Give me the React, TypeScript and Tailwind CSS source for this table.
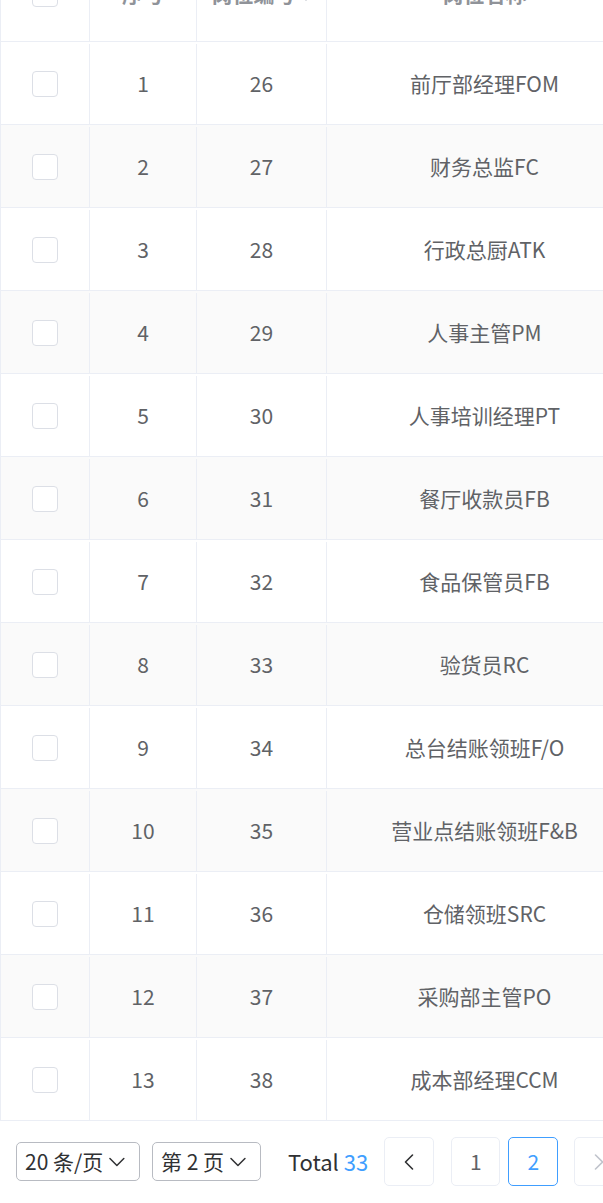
import React from "react";
import { ChevronDown, ChevronLeft, ChevronRight } from "lucide-react";

const rows: [number, number, string][] = [
  [1, 26, "前厅部经理FOM"],
  [2, 27, "财务总监FC"],
  [3, 28, "行政总厨ATK"],
  [4, 29, "人事主管PM"],
  [5, 30, "人事培训经理PT"],
  [6, 31, "餐厅收款员FB"],
  [7, 32, "食品保管员FB"],
  [8, 33, "验货员RC"],
  [9, 34, "总台结账领班F/O"],
  [10, 35, "营业点结账领班F&B"],
  [11, 36, "仓储领班SRC"],
  [12, 37, "采购部主管PO"],
  [13, 38, "成本部经理CCM"],
];

function Checkbox() {
  return <div className="w-[26px] h-[26px] rounded-[4px] border border-[#dcdfe6] bg-white" />;
}

export default function App() {
  return (
    <div
      className="w-[603px] h-[1203px] overflow-hidden bg-white text-[#606266]"
      style={{ fontFamily: '"Noto Sans CJK SC", "Noto Sans", sans-serif' }}
    >
      <div className="w-[642px] border-l border-[#ebeef5] mt-[-54px]">
        {/* header */}
        <div className="flex h-[96px] border-b border-[#ebeef5] bg-white text-[21px] font-bold text-[#909399]">
          <div className="w-[89px] shrink-0 border-r border-[#ebeef5] flex items-center justify-center">
            <Checkbox />
          </div>
          <div className="w-[107px] shrink-0 border-r border-[#ebeef5] flex items-center justify-center">序号</div>
          <div className="w-[130px] shrink-0 border-r border-[#ebeef5] flex items-center justify-center gap-1">
            <span>岗位编号</span>
            <span className="flex flex-col gap-[3px]">
              <span className="w-0 h-0 border-l-[6px] border-r-[6px] border-b-[6px] border-l-transparent border-r-transparent border-b-[#c0c4cc]" />
              <span className="w-0 h-0 border-l-[6px] border-r-[6px] border-t-[6px] border-l-transparent border-r-transparent border-t-[#c0c4cc]" />
            </span>
          </div>
          <div className="flex-1 flex items-center justify-center">岗位名称</div>
        </div>
        {rows.map(([n, code, name], i) => (
          <div
            key={n}
            className={`flex h-[83px] border-b border-[#ebeef5] text-[21px] pt-[2px] ${i % 2 === 1 ? "bg-[#fafafa]" : "bg-white"}`}
          >
            <div className="w-[89px] shrink-0 border-r border-[#ebeef5] flex items-center justify-center">
              <Checkbox />
            </div>
            <div className="w-[107px] shrink-0 border-r border-[#ebeef5] flex items-center justify-center">{n}</div>
            <div className="w-[130px] shrink-0 border-r border-[#ebeef5] flex items-center justify-center">{code}</div>
            <div className="flex-1 flex items-center justify-center">{name}</div>
          </div>
        ))}
      </div>
      {/* pagination */}
      <div className="flex items-center pl-4 pt-4 text-[21px] whitespace-nowrap">
        <div className="w-[124px] h-[39px] shrink-0 rounded-[5px] border border-[#b8bbc2] flex items-center justify-between pl-2 pr-2 text-[#303133]">
          <span>20 条/页</span>
          <ChevronDown size={28} strokeWidth={1.3} />
        </div>
        <div className="w-[109px] h-[39px] shrink-0 ml-3 rounded-[5px] border border-[#b8bbc2] flex items-center justify-between pl-2 pr-2 text-[#303133]">
          <span>第 2 页</span>
          <ChevronDown size={28} strokeWidth={1.3} />
        </div>
        <div className="ml-[27px] text-[#303133] text-[22px]">
          Total <span className="text-[#409eff]">33</span>
        </div>
        <div className="ml-4 w-[50px] h-[49px] shrink-0 rounded-[5px] border border-[#ebeef5] flex items-center justify-center text-[#303133]">
          <ChevronLeft size={28} strokeWidth={1.4} />
        </div>
        <div className="ml-[17px] w-[49px] h-[49px] shrink-0 rounded-[5px] border border-[#ebeef5] flex items-center justify-center">
          1
        </div>
        <div className="ml-2 w-[50px] h-[49px] shrink-0 rounded-[5px] border border-[#409eff] flex items-center justify-center text-[#409eff]">
          2
        </div>
        <div className="ml-4 w-[50px] h-[49px] shrink-0 rounded-[5px] border border-[#ebeef5] flex items-center justify-center text-[#c0c4cc]">
          <ChevronRight size={28} strokeWidth={1.4} />
        </div>
      </div>
    </div>
  );
}
